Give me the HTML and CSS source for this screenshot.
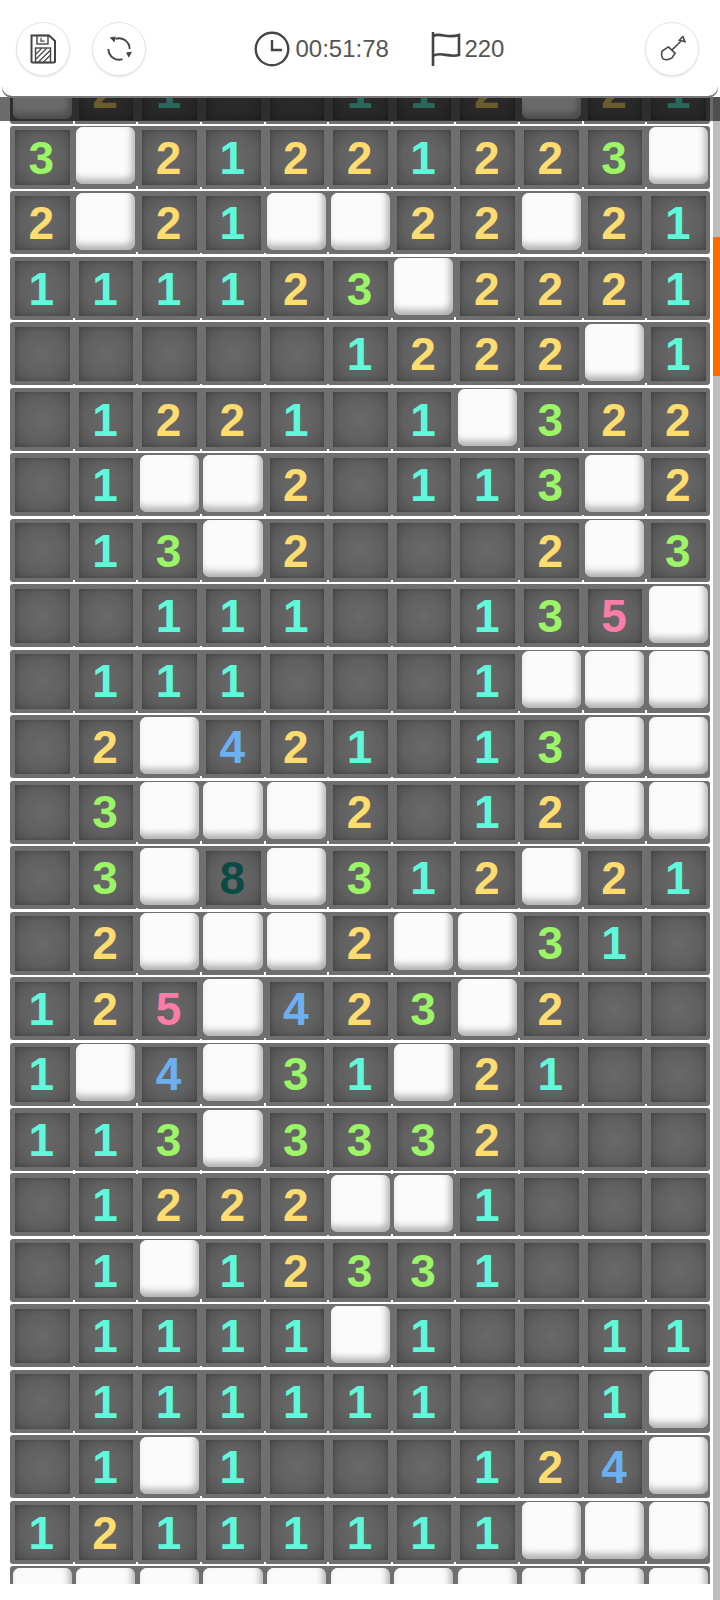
FILE: index.html
```html
<!DOCTYPE html>
<html lang="en">
<head>
<meta charset="utf-8">
<title>Minesweeper</title>
<link rel="stylesheet" href="styles.css">
</head>
<body>
<div class="app">
  <header class="header">
    <button class="round save" aria-label="Save">
      <svg width="26" height="30" viewBox="0 0 26 30" fill="none" stroke="#444" stroke-width="2">
        <path d="M1.5 1.5H19L25 7V27.5a1 1 0 0 1-1 1H2.5a1 1 0 0 1-1-1Z"/>
        <rect x="7" y="1.5" width="11" height="8.5" stroke-width="1.4"/>
        <path d="M11 3.8V7.2H14.5" stroke-width="1.2"/>
        <rect x="5.5" y="14" width="15" height="14.5" stroke-width="1.4"/>
        <path d="M6 20L11.5 14.5M6 25L16.5 14.5M8.5 28L20 16.5M13.5 28L20 21.5" stroke-width="1.2"/>
      </svg>
    </button>
    <button class="round" aria-label="Restart">
      <svg width="26" height="26" viewBox="0 0 26 26" fill="none" stroke="#444" stroke-width="1.9">
        <path d="M9.5 2.8A10.7 10.7 0 0 1 23.6 13"/>
        <path d="M16.5 23.2A10.7 10.7 0 0 1 2.4 13"/>
        <path d="M3.6 1.6L9.6 0.5L8.6 6.6Z" fill="#444" stroke="none"/>
        <path d="M20 16.5L26 15.8L22.8 21.8Z" fill="#444" stroke="none"/>
      </svg>
    </button>
    <div class="stat timer">
      <svg width="36" height="36" viewBox="0 0 36 36" fill="none" stroke="#444" stroke-width="2.4">
        <circle cx="18" cy="18" r="16.3"/>
        <path d="M18 9V19H28"/>
      </svg>
      <span>00:51:78</span>
    </div>
    <div class="stat flags">
      <svg width="30" height="34" viewBox="0 0 30 34" fill="none" stroke="#444" stroke-width="2.6">
        <path d="M2 1V33.5" stroke-linecap="round"/>
        <path d="M2 4C9 0 16 7 28 3V23C17 26 10 19 2 24"/>
      </svg>
      <span>220</span>
    </div>
    <button class="round dig" aria-label="Dig">
      <svg width="27" height="27" viewBox="0 0 26 26" fill="none" stroke="#444" stroke-width="1.5">
        <path d="M9 11.5L15.5 17.5L12.5 22Q8 25 4 23Q1.5 20 3 15.5Z"/>
        <path d="M12.5 14.5L21 6"/>
        <path d="M19.5 5L23 1.5L25 6.5Z"/>
      </svg>
    </button>
  </header>
  <div class="shade"></div>
  <div class="track"><div class="thumb"></div></div>
  <main class="board">
    <div class="row"><div class="cell closed"></div><div class="cell n2">2</div><div class="cell n1">1</div><div class="cell"></div><div class="cell"></div><div class="cell n1">1</div><div class="cell n1">1</div><div class="cell n2">2</div><div class="cell closed"></div><div class="cell n2">2</div><div class="cell n1">1</div></div>
    <div class="row"><div class="cell n3">3</div><div class="cell closed"></div><div class="cell n2">2</div><div class="cell n1">1</div><div class="cell n2">2</div><div class="cell n2">2</div><div class="cell n1">1</div><div class="cell n2">2</div><div class="cell n2">2</div><div class="cell n3">3</div><div class="cell closed"></div></div>
    <div class="row"><div class="cell n2">2</div><div class="cell closed"></div><div class="cell n2">2</div><div class="cell n1">1</div><div class="cell closed"></div><div class="cell closed"></div><div class="cell n2">2</div><div class="cell n2">2</div><div class="cell closed"></div><div class="cell n2">2</div><div class="cell n1">1</div></div>
    <div class="row"><div class="cell n1">1</div><div class="cell n1">1</div><div class="cell n1">1</div><div class="cell n1">1</div><div class="cell n2">2</div><div class="cell n3">3</div><div class="cell closed"></div><div class="cell n2">2</div><div class="cell n2">2</div><div class="cell n2">2</div><div class="cell n1">1</div></div>
    <div class="row"><div class="cell"></div><div class="cell"></div><div class="cell"></div><div class="cell"></div><div class="cell"></div><div class="cell n1">1</div><div class="cell n2">2</div><div class="cell n2">2</div><div class="cell n2">2</div><div class="cell closed"></div><div class="cell n1">1</div></div>
    <div class="row"><div class="cell"></div><div class="cell n1">1</div><div class="cell n2">2</div><div class="cell n2">2</div><div class="cell n1">1</div><div class="cell"></div><div class="cell n1">1</div><div class="cell closed"></div><div class="cell n3">3</div><div class="cell n2">2</div><div class="cell n2">2</div></div>
    <div class="row"><div class="cell"></div><div class="cell n1">1</div><div class="cell closed"></div><div class="cell closed"></div><div class="cell n2">2</div><div class="cell"></div><div class="cell n1">1</div><div class="cell n1">1</div><div class="cell n3">3</div><div class="cell closed"></div><div class="cell n2">2</div></div>
    <div class="row"><div class="cell"></div><div class="cell n1">1</div><div class="cell n3">3</div><div class="cell closed"></div><div class="cell n2">2</div><div class="cell"></div><div class="cell"></div><div class="cell"></div><div class="cell n2">2</div><div class="cell closed"></div><div class="cell n3">3</div></div>
    <div class="row"><div class="cell"></div><div class="cell"></div><div class="cell n1">1</div><div class="cell n1">1</div><div class="cell n1">1</div><div class="cell"></div><div class="cell"></div><div class="cell n1">1</div><div class="cell n3">3</div><div class="cell n5">5</div><div class="cell closed"></div></div>
    <div class="row"><div class="cell"></div><div class="cell n1">1</div><div class="cell n1">1</div><div class="cell n1">1</div><div class="cell"></div><div class="cell"></div><div class="cell"></div><div class="cell n1">1</div><div class="cell closed"></div><div class="cell closed"></div><div class="cell closed"></div></div>
    <div class="row"><div class="cell"></div><div class="cell n2">2</div><div class="cell closed"></div><div class="cell n4">4</div><div class="cell n2">2</div><div class="cell n1">1</div><div class="cell"></div><div class="cell n1">1</div><div class="cell n3">3</div><div class="cell closed"></div><div class="cell closed"></div></div>
    <div class="row"><div class="cell"></div><div class="cell n3">3</div><div class="cell closed"></div><div class="cell closed"></div><div class="cell closed"></div><div class="cell n2">2</div><div class="cell"></div><div class="cell n1">1</div><div class="cell n2">2</div><div class="cell closed"></div><div class="cell closed"></div></div>
    <div class="row"><div class="cell"></div><div class="cell n3">3</div><div class="cell closed"></div><div class="cell n8">8</div><div class="cell closed"></div><div class="cell n3">3</div><div class="cell n1">1</div><div class="cell n2">2</div><div class="cell closed"></div><div class="cell n2">2</div><div class="cell n1">1</div></div>
    <div class="row"><div class="cell"></div><div class="cell n2">2</div><div class="cell closed"></div><div class="cell closed"></div><div class="cell closed"></div><div class="cell n2">2</div><div class="cell closed"></div><div class="cell closed"></div><div class="cell n3">3</div><div class="cell n1">1</div><div class="cell"></div></div>
    <div class="row"><div class="cell n1">1</div><div class="cell n2">2</div><div class="cell n5">5</div><div class="cell closed"></div><div class="cell n4">4</div><div class="cell n2">2</div><div class="cell n3">3</div><div class="cell closed"></div><div class="cell n2">2</div><div class="cell"></div><div class="cell"></div></div>
    <div class="row"><div class="cell n1">1</div><div class="cell closed"></div><div class="cell n4">4</div><div class="cell closed"></div><div class="cell n3">3</div><div class="cell n1">1</div><div class="cell closed"></div><div class="cell n2">2</div><div class="cell n1">1</div><div class="cell"></div><div class="cell"></div></div>
    <div class="row"><div class="cell n1">1</div><div class="cell n1">1</div><div class="cell n3">3</div><div class="cell closed"></div><div class="cell n3">3</div><div class="cell n3">3</div><div class="cell n3">3</div><div class="cell n2">2</div><div class="cell"></div><div class="cell"></div><div class="cell"></div></div>
    <div class="row"><div class="cell"></div><div class="cell n1">1</div><div class="cell n2">2</div><div class="cell n2">2</div><div class="cell n2">2</div><div class="cell closed"></div><div class="cell closed"></div><div class="cell n1">1</div><div class="cell"></div><div class="cell"></div><div class="cell"></div></div>
    <div class="row"><div class="cell"></div><div class="cell n1">1</div><div class="cell closed"></div><div class="cell n1">1</div><div class="cell n2">2</div><div class="cell n3">3</div><div class="cell n3">3</div><div class="cell n1">1</div><div class="cell"></div><div class="cell"></div><div class="cell"></div></div>
    <div class="row"><div class="cell"></div><div class="cell n1">1</div><div class="cell n1">1</div><div class="cell n1">1</div><div class="cell n1">1</div><div class="cell closed"></div><div class="cell n1">1</div><div class="cell"></div><div class="cell"></div><div class="cell n1">1</div><div class="cell n1">1</div></div>
    <div class="row"><div class="cell"></div><div class="cell n1">1</div><div class="cell n1">1</div><div class="cell n1">1</div><div class="cell n1">1</div><div class="cell n1">1</div><div class="cell n1">1</div><div class="cell"></div><div class="cell"></div><div class="cell n1">1</div><div class="cell closed"></div></div>
    <div class="row"><div class="cell"></div><div class="cell n1">1</div><div class="cell closed"></div><div class="cell n1">1</div><div class="cell"></div><div class="cell"></div><div class="cell"></div><div class="cell n1">1</div><div class="cell n2">2</div><div class="cell n4">4</div><div class="cell closed"></div></div>
    <div class="row"><div class="cell n1">1</div><div class="cell n2">2</div><div class="cell n1">1</div><div class="cell n1">1</div><div class="cell n1">1</div><div class="cell n1">1</div><div class="cell n1">1</div><div class="cell n1">1</div><div class="cell closed"></div><div class="cell closed"></div><div class="cell closed"></div></div>
    <div class="row"><div class="cell closed"></div><div class="cell closed"></div><div class="cell closed"></div><div class="cell closed"></div><div class="cell closed"></div><div class="cell closed"></div><div class="cell closed"></div><div class="cell closed"></div><div class="cell closed"></div><div class="cell closed"></div><div class="cell closed"></div></div>
  </main>
</div>
</body>
</html>
```

FILE: styles.css
```css
* { box-sizing: border-box; }
html, body { margin: 0; padding: 0; background: #fff; }
.app {
  position: relative;
  width: 720px;
  height: 1600px;
  overflow: hidden;
  background: #fff;
  font-family: "Liberation Sans", Arial, sans-serif;
}
.header {
  position: absolute;
  top: 0;
  left: 2px;
  right: 2px;
  height: 96px;
  z-index: 3;
  display: flex;
  align-items: center;
  padding: 1px 19px 0 14px;
  background: #fff;
  border-radius: 0 0 10px 10px;
  box-shadow: 0 2px 0 #777;
}
.round {
  flex: none;
  width: 54px;
  height: 54px;
  padding: 0;
  display: flex;
  align-items: center;
  justify-content: center;
  background: #fff;
  border: 1px solid #e6e6e6;
  border-radius: 50%;
  box-shadow: 0 1px 2px rgba(0, 0, 0, .12);
}
.round + .round { margin-left: 22px; }
.stat {
  display: flex;
  align-items: center;
  color: #555;
  font-size: 24px;
  line-height: 1;
}
.timer { margin-left: 107.5px; gap: 6px; }
.flags { margin-left: 42.5px; gap: 3px; }
.dig { margin-left: auto; }
.shade {
  position: absolute;
  top: 97px;
  left: 0;
  right: 0;
  height: 24px;
  z-index: 2;
  background: rgba(0, 0, 0, .58);
}
.track {
  position: absolute;
  top: 97px;
  bottom: 0;
  right: 0;
  width: 7px;
  z-index: 1;
  background: #bdbdbd;
}
.thumb {
  height: 139px;
  margin-top: 140px;
  background: #ff6a00;
}
.board {
  width: 700px;
  height: 1523.5px;
  margin: 0 0 0 10px;
  position: relative;
  top: 60.5px;
  overflow: hidden;
}
.row {
  display: grid;
  grid-template-columns: repeat(11, 1fr);
  height: 63px;
  margin-bottom: 2.48px;
  background: #6f6f6f;
  border-radius: 3px;
}
.cell {
  position: relative;
  margin: 4.5px 4px 4px 5px;
  padding-right: 2px;
  display: flex;
  align-items: center;
  justify-content: center;
  font-size: 46px;
  font-weight: 700;
  line-height: 1;
  background: radial-gradient(circle at center, #696969 0%, #606060 55%, #4f4f4f 100%);
  box-shadow: inset 0 0 4px rgba(0, 0, 0, .25);
}
.cell::after {
  content: "";
  position: absolute;
  right: -5px;
  bottom: -6.5px;
  width: 2px;
  height: 4px;
  background: #fff;
}
.cell:last-child::after { display: none; }
.closed {
  margin: 1.5px 2px 4.5px 2.5px;
  background: #fbfbfb;
  border-radius: 7px;
  box-shadow: inset -3px -5px 7px rgba(0, 0, 0, .3), inset 1px 1px 2px #fff;
}
.closed::after { right: -3px; bottom: -6px; }
.n1 { color: #60f8da; }
.n2 { color: #ffdc70; }
.n3 { color: #9cf566; }
.n4 { color: #6cb0f0; }
.n5 { color: #fb7ca6; }
.n8 { color: #0c4a45; }
```
